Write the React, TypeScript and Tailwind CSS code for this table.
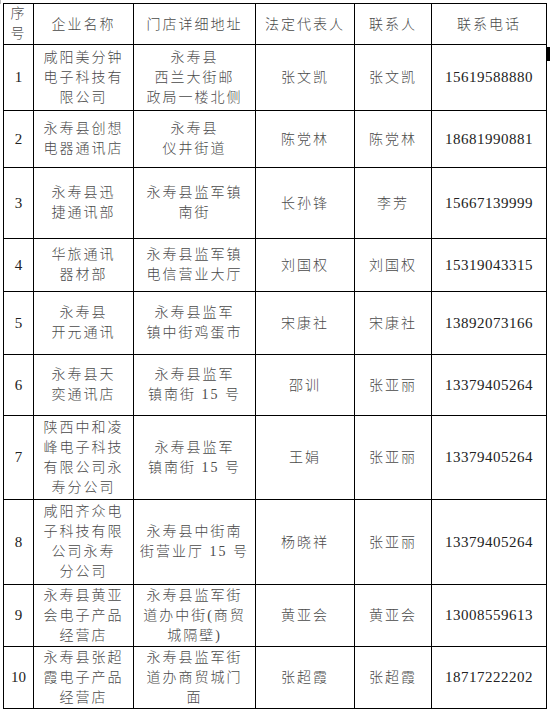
import React from 'react';

type Row = {
  no: string;
  name: string[];
  addr: string[];
  legal: string;
  contact: string;
  phone: string;
  h: string;
};

const rows: Row[] = [
  { no: '1', name: ['咸阳美分钟', '电子科技有', '限公司'], addr: ['永寿县', '西兰大街邮', '政局一楼北侧'], legal: '张文凯', contact: '张文凯', phone: '15619588880', h: 'h-[66px]' },
  { no: '2', name: ['永寿县创想', '电器通讯店'], addr: ['永寿县', '仪井街道'], legal: '陈党林', contact: '陈党林', phone: '18681990881', h: 'h-[57px]' },
  { no: '3', name: ['永寿县迅', '捷通讯部'], addr: ['永寿县监军镇', '南街'], legal: '长孙锋', contact: '李芳', phone: '15667139999', h: 'h-[71px]' },
  { no: '4', name: ['华旅通讯', '器材部'], addr: ['永寿县监军镇', '电信营业大厅'], legal: '刘国权', contact: '刘国权', phone: '15319043315', h: 'h-[53px]' },
  { no: '5', name: ['永寿县', '开元通讯'], addr: ['永寿县监军', '镇中街鸡蛋市'], legal: '宋康社', contact: '宋康社', phone: '13892073166', h: 'h-[63px]' },
  { no: '6', name: ['永寿县天', '奕通讯店'], addr: ['永寿县监军', '镇南街 15 号'], legal: '邵训', contact: '张亚丽', phone: '13379405264', h: 'h-[61px]' },
  { no: '7', name: ['陕西中和凌', '峰电子科技', '有限公司永', '寿分公司'], addr: ['永寿县监军', '镇南街 15 号'], legal: '王娟', contact: '张亚丽', phone: '13379405264', h: 'h-[84px]' },
  { no: '8', name: ['咸阳齐众电', '子科技有限', '公司永寿', '分公司'], addr: ['永寿县中街南', '街营业厅 15 号'], legal: '杨晓祥', contact: '张亚丽', phone: '13379405264', h: 'h-[85px]' },
  { no: '9', name: ['永寿县黄亚', '会电子产品', '经营店'], addr: ['永寿县监军街', '道办中街(商贸', '城隔壁)'], legal: '黄亚会', contact: '黄亚会', phone: '13008559613', h: 'h-[62px]' },
  { no: '10', name: ['永寿县张超', '霞电子产品', '经营店'], addr: ['永寿县监军街', '道办商贸城门', '面'], legal: '张超霞', contact: '张超霞', phone: '18717222202', h: 'h-[62px]' },
];

const cell = 'border border-black text-center align-middle p-0';

const Lines: React.FC<{ lines: string[] }> = ({ lines }) => (
  <div className="flex flex-col items-center leading-[20px]">
    {lines.map((l, i) => (
      <span key={i} className="whitespace-nowrap tracking-[2px]">{l}</span>
    ))}
  </div>
);

export default function App() {
  return (
    <div className="relative w-[550px] h-[710px] bg-white text-[#4a4a4a] font-light text-[14px] font-['Liberation_Serif','Noto_Sans_CJK_SC',serif] pl-[3px] pt-[3px]">
      <div className="absolute left-0 top-0 w-px h-[4px] bg-[#bbb]" />
      <table className="table-fixed border-collapse w-[543px]">
        <colgroup>
          <col className="w-[30px]" />
          <col className="w-[100px]" />
          <col className="w-[122px]" />
          <col className="w-[99px]" />
          <col className="w-[77px]" />
          <col className="w-[115px]" />
        </colgroup>
        <thead>
          <tr className="h-[39px]">
            <th className={`${cell} font-light`}>
              <Lines lines={['序', '号']} />
            </th>
            <th className={`${cell} font-light tracking-[2px]`}>企业名称</th>
            <th className={`${cell} font-light tracking-[2px]`}>门店详细地址</th>
            <th className={`${cell} font-light tracking-[2px]`}>法定代表人</th>
            <th className={`${cell} font-light tracking-[2px]`}>联系人</th>
            <th className={`${cell} font-light tracking-[2px]`}>联系电话</th>
          </tr>
        </thead>
        <tbody>
          {rows.map((r) => (
            <tr key={r.no} className={r.h}>
              <td className={`${cell} font-normal text-[15px] text-[#222]`}>{r.no}</td>
              <td className={cell}>
                <Lines lines={r.name} />
              </td>
              <td className={cell}>
                <Lines lines={r.addr} />
              </td>
              <td className={`${cell} tracking-[2px]`}>{r.legal}</td>
              <td className={`${cell} tracking-[2px]`}>{r.contact}</td>
              <td className={`${cell} font-normal text-[15px] tracking-[0.5px] text-[#222]`}>{r.phone}</td>
            </tr>
          ))}
        </tbody>
      </table>
      <div className="absolute left-[547px] top-[47px] w-[3px] h-[14px] bg-black" />
    </div>
  );
}
